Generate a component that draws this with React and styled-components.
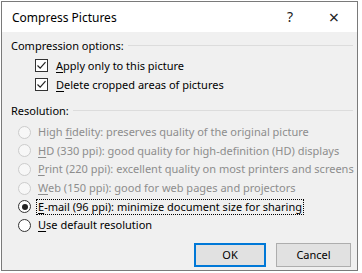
import React from 'react';
import styled, { createGlobalStyle } from 'styled-components';

const GlobalStyle = createGlobalStyle`
  html, body {
    margin: 0;
    padding: 0;
    background: #ffffff;
  }
  body {
    font-family: "Noto Sans", "Liberation Sans", sans-serif;
    font-size: 11px;
    color: #000000;
  }
`;

const Page = styled.div`
  width: 362px;
  height: 273px;
  padding: 1px 0 0 1px;
  box-sizing: border-box;
  background: #ffffff;
`;

const Dialog = styled.div`
  width: 357px;
  height: 270px;
  box-sizing: border-box;
  border: 1px solid #7a7a7a;
  background: #f0f0f0;
  display: flex;
  flex-direction: column;
`;

const TitleBar = styled.div`
  height: 30px;
  background: #ffffff;
  display: flex;
  align-items: center;
  padding-left: 10px;
  flex-shrink: 0;
`;

const Title = styled.div`
  flex: 1;
  font-size: 12px;
  color: #000;
`;

const TitleButton = styled.div`
  width: ${p => p.w}px;
  margin-right: ${p => p.mr || 0}px;
  text-align: center;
  font-size: ${p => p.size}px;
  color: #222;
  line-height: 1;
`;

const Body = styled.div`
  padding: 5px 4px 0 9px;
  display: flex;
  flex-direction: column;
  flex: 1;
`;

const GroupHeader = styled.div`
  display: flex;
  align-items: center;
  height: 16px;
  gap: 4px;
  margin-top: ${p => p.top || 0}px;
`;

const Line = styled.div`
  flex: 1;
  height: 1px;
  background: #dcdcdc;
`;

const CheckRow = styled.label`
  display: flex;
  align-items: center;
  height: 19px;
  margin-left: 24px;
  margin-top: ${p => p.top || 0}px;
  gap: 8px;
`;

const Box = styled.span`
  width: 11px;
  height: 11px;
  border: 1px solid #333;
  background: #fff;
  display: flex;
  align-items: center;
  justify-content: center;
  flex-shrink: 0;
`;

const RadioList = styled.div`
  display: flex;
  flex-direction: column;
  margin-top: 5px;
`;

const RadioRow = styled.div`
  display: flex;
  align-items: center;
  height: 18.6px;
  margin-left: 7px;
  gap: 6px;
  color: ${p => (p.disabled ? '#8d8d8d' : '#000')};
`;

const Circle = styled.span`
  width: 11px;
  height: 11px;
  border-radius: 50%;
  border: 1px solid ${p => (p.disabled ? '#cccccc' : '#333')};
  background: ${p => (p.disabled ? '#f7f7f7' : '#fff')};
  display: flex;
  align-items: center;
  justify-content: center;
  flex-shrink: 0;
`;

const Dot = styled.span`
  width: 6px;
  height: 6px;
  border-radius: 50%;
  background: #222;
`;

const Label = styled.span`
  white-space: nowrap;
  padding: 0 1px;
  outline: ${p => (p.focus ? '1px dotted #000' : 'none')};
  outline-offset: 0;
  line-height: 14px;
`;

const U = styled.span`
  text-decoration: underline;
  text-underline-offset: 2px;
`;

const Buttons = styled.div`
  display: flex;
  justify-content: flex-end;
  gap: 10px;
  margin-top: 8px;
  padding-right: 2px;
`;

const Button = styled.div`
  width: ${p => (p.primary ? 68 : 73)}px;
  height: ${p => (p.primary ? 20 : 22)}px;
  background: #e1e1e1;
  border: ${p => (p.primary ? '2px solid #0078d7' : '1px solid #adadad')};
  display: flex;
  align-items: center;
  justify-content: center;
  font-size: 11px;
`;

const Check = () => (
  <svg width="11" height="11" viewBox="0 0 11 11">
    <path d="M1.5 5.5 L4.2 8.2 L9.5 2.2" fill="none" stroke="#222" strokeWidth="1.2" />
  </svg>
);

const radios = [
  { key: 'f', pre: 'High ', post: 'idelity: preserves quality of the original picture', disabled: true },
  { key: 'H', pre: '', post: 'D (330 ppi): good quality for high-definition (HD) displays', disabled: true },
  { key: 'P', pre: '', post: 'rint (220 ppi): excellent quality on most printers and screens', disabled: true },
  { key: 'W', pre: '', post: 'eb (150 ppi): good for web pages and projectors', disabled: true },
  { key: 'E', pre: '', post: '-mail (96 ppi): minimize document size for sharing', checked: true, focus: true },
  { key: 'U', pre: '', post: 'se default resolution' },
];

export default function App() {
  return (
    <Page>
      <GlobalStyle />
      <Dialog>
        <TitleBar>
          <Title>Compress Pictures</Title>
          <TitleButton w={14} size={14} mr={22}>?</TitleButton>
          <TitleButton w={30} size={18}>×</TitleButton>
          <div style={{ width: 8 }} />
        </TitleBar>
        <Body>
          <GroupHeader>
            Compression options:
            <Line />
          </GroupHeader>
          <CheckRow top={3}>
            <Box><Check /></Box>
            <span><U>A</U>pply only to this picture</span>
          </CheckRow>
          <CheckRow>
            <Box><Check /></Box>
            <span><U>D</U>elete cropped areas of pictures</span>
          </CheckRow>
          <GroupHeader top={8}>
            Resolution:
            <Line />
          </GroupHeader>
          <RadioList>
            {radios.map(r => (
              <RadioRow key={r.key} disabled={r.disabled}>
                <Circle disabled={r.disabled}>{r.checked && <Dot />}</Circle>
                <Label focus={r.focus}>
                  {r.pre}<U>{r.key}</U>{r.post}
                </Label>
              </RadioRow>
            ))}
          </RadioList>
          <Buttons>
            <Button primary>OK</Button>
            <Button>Cancel</Button>
          </Buttons>
        </Body>
      </Dialog>
    </Page>
  );
}
